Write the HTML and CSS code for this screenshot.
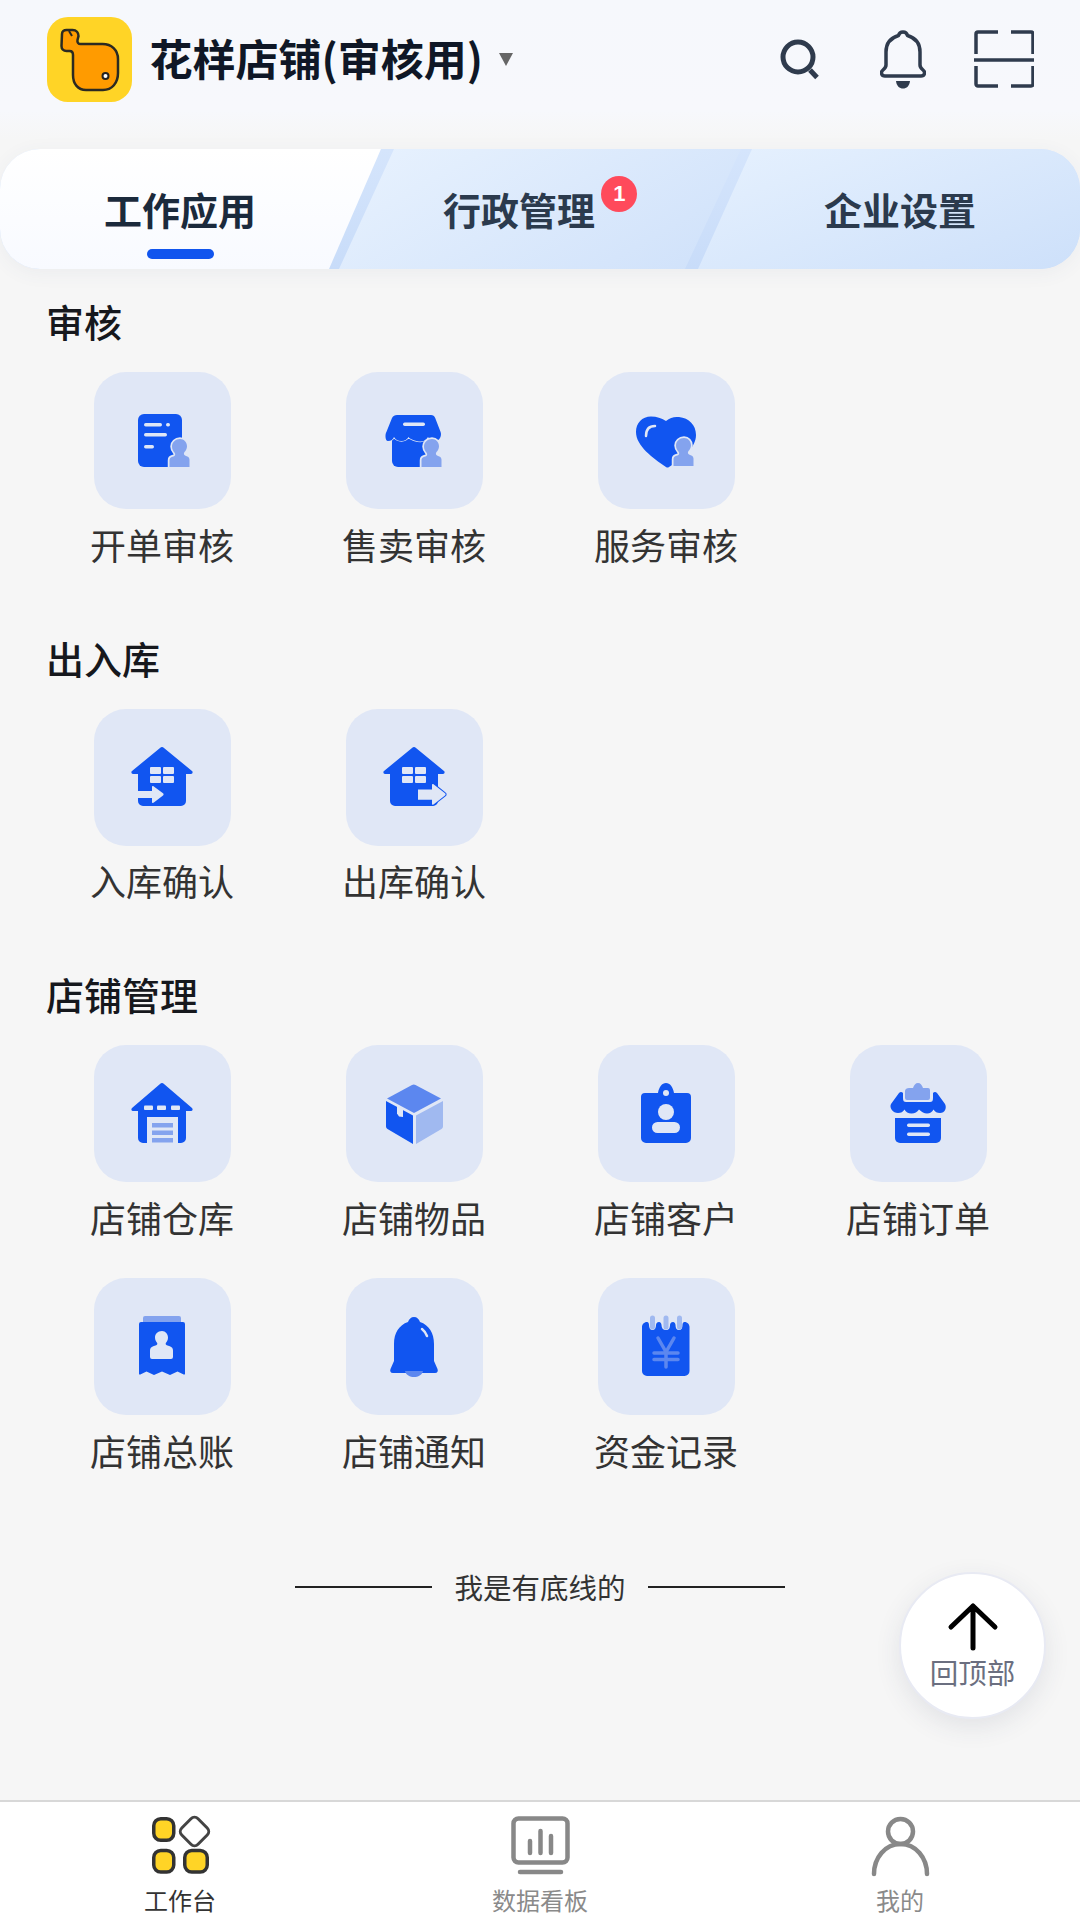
FILE: index.html
```html
<!DOCTYPE html>
<html lang="zh-CN">
<head>
<meta charset="utf-8">
<title>花样店铺</title>
<link rel="stylesheet" href="styles.css">
</head>
<body>
<svg class="defs" width="0" height="0" aria-hidden="true">
  <defs>
    <symbol id="stamp" viewBox="0 0 80 80">
      <path class="l stamp-cut" d="M58 38c4.200 0 7 3.300 7 7.200 0 2.600-1.200 4.300-2.500 5.900-.9 1.100-.8 2.900.5 3.500l2.300.8c1.500.5 2.200 1.900 2.200 3.300V66H47.500v-6.600c0-1.500.8-2.900 2.300-3.400l2.300-.8c1.300-.6 1.400-2.400.5-3.500-1.400-1.700-2.600-3.400-2.600-6.300 0-4 3.500-7.400 8-7.400z"/>
    </symbol>
    <symbol id="house" viewBox="0 0 80 80">
      <path class="b" d="M38 11a3 3 0 0 1 4 0l28 23c1.200 1 .6 3-1 3h-5v27a5 5 0 0 1-5 5H21a5 5 0 0 1-5-5V37h-5c-1.600 0-2.200-2-1-3z"/>
      <rect class="c" x="28" y="30" width="11" height="7" rx="1"/>
      <rect class="c" x="41" y="30" width="11" height="7" rx="1"/>
      <rect class="c" x="28" y="39" width="11" height="7" rx="1"/>
      <rect class="c" x="41" y="39" width="11" height="7" rx="1"/>
    </symbol>
  </defs>
</svg>
<div class="page">
  <header class="topbar">
    <div class="brand">
      <svg class="logo" viewBox="0 0 85 85">
        <rect class="logo-bg" width="85" height="85" rx="21"/>
        <path class="logo-fish" d="M15 17c0-2.500 2-4 4.500-4h6c4 0 6 3 6 6l-1 4c-.5 2.500 1 4 3 4h22c9 0 15.500 6 15.500 15v14c0 10-6 17-15 17H39c-8 0-13-6-13-15V38c0-2.500-1.500-4-3.500-4h-3c-3 0-5-2-5-5z"/>
        <path class="logo-line" d="M22 14l3 5"/>
        <circle class="logo-eye" cx="58.500" cy="59" r="3"/>
      </svg>
      <span class="shop">花样店铺(审核用)</span>
      <svg class="caret" viewBox="0 0 14 13"><path class="caret-fill" d="M0 0h14L7 13z"/></svg>
    </div>
    <div class="actions">
      <svg class="act act-search" viewBox="0 0 40 50">
        <circle class="ink" cx="18" cy="22" r="15"/>
        <path class="ink" d="M30 35l7 7.500"/>
      </svg>
      <svg class="act act-bell" viewBox="0 0 46 60">
        <path class="ink thin" d="M23 2c2.500 0 4 1.500 4.500 3.500C36 8 40 14 40 22v13c0 2 1 3.400 3 5 2.800 2.300 1.500 6-2 6H5c-3.500 0-4.800-3.700-2-6 2-1.600 3-3 3-5V22C6 14 10 8 18.500 5.500 19 3.500 20.500 2 23 2z"/>
        <path class="ink-fill" d="M16 51h14c-.5 5-3.500 7.500-7 7.500S16.500 56 16 51z"/>
      </svg>
      <svg class="act act-scan" viewBox="0 0 60 58">
        <path class="ink thin" d="M24 2H4A2 2 0 0 0 2 4v20M37 2h20a2 2 0 0 1 2 2v20M24 56H4a2 2 0 0 1-2-2V36M37 56h20a2 2 0 0 0 2-2V36M0 30h60"/>
      </svg>
    </div>
  </header>

  <nav class="tabs">
    <div class="tab tab-a"><span class="tab-text">工作应用</span><i class="tab-line"></i></div>
    <div class="tab tab-b"><span class="tab-text">行政管理<b class="badge">1</b></span></div>
    <div class="tab tab-c"><span class="tab-text">企业设置</span></div>
  </nav>

  <main class="content">
    <section class="group">
      <h2 class="group-title">审核</h2>
      <div class="grid">
        <div class="item">
          <div class="tile"><svg class="ico" viewBox="0 0 80 80">
            <rect class="b" x="16" y="13" width="44" height="53" rx="6"/>
            <rect class="c" x="22" y="22" width="18" height="3.500" rx="1.700"/>
            <rect class="c" x="44" y="22" width="4" height="3.500" rx="1.700"/>
            <rect class="c" x="22" y="32" width="23" height="3.500" rx="1.700"/>
            <rect class="c" x="22" y="44" width="10" height="3.500" rx="1.700"/>
            <use href="#stamp" width="80" height="80"/>
          </svg></div>
          <span class="label">开单审核</span>
        </div>
        <div class="item">
          <div class="tile"><svg class="ico" viewBox="0 0 80 80">
            <path class="b" d="M18 38h44v28H24a6 6 0 0 1-6-6z"/>
            <path class="b cut" d="M23 14h34c2 0 3.500 1 4.200 3l5.400 14c1.400 4-1 9-5.600 9-3.500 0-5.500-1.300-7-4-1.500 2.700-4 4.500-7.500 4.500S36 38.500 34.500 36c-1.500 2.700-3.700 4-7 4-3.800 0-6-1.300-7.500-4-1 2.500-3 4-6 4-3 0-3-7-1.600-9L18 17c.8-2 3-3 5-3z"/>
            <rect class="c" x="29" y="21.500" width="22" height="3.500" rx="1.700"/>
            <use href="#stamp" width="80" height="80"/>
          </svg></div>
          <span class="label">售卖审核</span>
        </div>
        <div class="item">
          <div class="tile"><svg class="ico" viewBox="0 0 80 80">
            <path class="b" d="M40 20c4-3.500 8-4.500 13-4 10 1 17 8 17 18 0 13-14 24-27 32-1 .8-2 .8-3 0C27 57 10 45 10 31c0-9 6-15.500 15-15.500 6 0 10 1.500 15 4.500z"/>
            <path class="hl" d="M20 35c0-7 3-10 9-10"/>
            <use href="#stamp" y="-1" width="80" height="80"/>
          </svg></div>
          <span class="label">服务审核</span>
        </div>
      </div>
    </section>

    <section class="group">
      <h2 class="group-title">出入库</h2>
      <div class="grid">
        <div class="item">
          <div class="tile"><svg class="ico" viewBox="0 0 80 80">
            <use href="#house" width="80" height="80"/>
            <path class="c" d="M16 54h14v-4c0-.8.800-1.200 1.500-.8L41 56.300c.8.600.8 1.600 0 2.200l-9.500 7.300c-.7.400-1.500 0-1.500-.8v-4H16z"/>
          </svg></div>
          <span class="label">入库确认</span>
        </div>
        <div class="item">
          <div class="tile"><svg class="ico" viewBox="0 0 80 80">
            <use href="#house" width="80" height="80"/>
            <path class="c blue-edge" d="M44 52.500h14v-4.500c0-.8.800-1.200 1.500-.8L71 56.300c.8.600.8 1.600 0 2.200L59.500 67.500c-.7.400-1.500 0-1.500-.8v-4H44z"/>
          </svg></div>
          <span class="label">出库确认</span>
        </div>
      </div>
    </section>

    <section class="group">
      <h2 class="group-title">店铺管理</h2>
      <div class="grid">
        <div class="item">
          <div class="tile"><svg class="ico" viewBox="0 0 80 80">
            <path class="b" d="M38 10a3 3 0 0 1 4 0l28 24c1.200 1 .6 3-1 3h-5v27a5 5 0 0 1-5 5h-3V43H25v26h-4a5 5 0 0 1-5-5V37h-5c-1.600 0-2.200-2-1-3z"/>
            <rect class="c" x="22" y="31.500" width="9" height="4.500" rx="1"/>
            <rect class="c" x="35" y="31.500" width="9" height="4.500" rx="1"/>
            <rect class="c" x="49" y="31.500" width="9" height="4.500" rx="1"/>
            <rect class="l" x="30" y="49" width="21" height="4.500"/>
            <rect class="l" x="30" y="56.500" width="21" height="4.500"/>
            <rect class="l" x="30" y="64" width="21" height="4.500"/>
          </svg></div>
          <span class="label">店铺仓库</span>
        </div>
        <div class="item">
          <div class="tile"><svg class="ico" viewBox="0 0 80 80">
            <path class="mid" d="M38 11a4 4 0 0 1 3.500 0L67 24.500 40 39 13 24.500z"/>
            <path class="b" d="M12 27l27 14.500V70L13.500 55A3 3 0 0 1 12 52.500z"/>
            <path class="pale" d="M69 27L42 41.500V70l25.500-15A3 3 0 0 0 69 52.500z"/>
            <path class="c" d="M23 31l6 3.500V43l-4-.5-2-3z"/>
          </svg></div>
          <span class="label">店铺物品</span>
        </div>
        <div class="item">
          <div class="tile"><svg class="ico" viewBox="0 0 80 80">
            <path class="b" d="M19 19h13c1-6 4-10 8-10s7 4 8 10h13a4 4 0 0 1 4 4v41a5 5 0 0 1-5 5H20a5 5 0 0 1-5-5V23a4 4 0 0 1 4-4z"/>
            <circle class="c" cx="40" cy="19" r="3"/>
            <circle class="c" cx="40" cy="38" r="8"/>
            <rect class="c" x="26" y="48" width="28" height="11" rx="5.500"/>
          </svg></div>
          <span class="label">店铺客户</span>
        </div>
        <div class="item">
          <div class="tile"><svg class="ico" viewBox="0 0 80 80">
            <path class="b" d="M17 44h46v20a5 5 0 0 1-5 5H22a5 5 0 0 1-5-5z"/>
            <path class="b cut" d="M21 19c1.500-1.500 3-1 4 0v5c0 3 1 4 3 4h24c2 0 3-1 3-4v-5c1-1 2.500-1.500 4 0l8 11c2 4 0 9-5 9-3 0-5-1-6.500-3.500C54 38 52 39.500 49 39.500S44 38 41 35.500c-2 2.500-4 4-7.500 4S28 38 26.500 35.500C25 38 23 39 20 39c-5 0-9-5-7-9z"/>
            <path class="l" d="M31 14h4c1-3 2.500-5 5-5s4 2 5 5h5a2 2 0 0 1 2 2v8a2 2 0 0 1-2 2H29a2 2 0 0 1-2-2v-7c0-2 2-3 4-3z"/>
            <rect class="c" x="29" y="49.500" width="23" height="3.500" rx="1.700"/>
            <rect class="c" x="29" y="58.500" width="23" height="3.500" rx="1.700"/>
          </svg></div>
          <span class="label">店铺订单</span>
        </div>
        <div class="item">
          <div class="tile"><svg class="ico" viewBox="0 0 80 80">
            <path class="l" d="M23 9h34a2 2 0 0 1 2 2v5H21v-5a2 2 0 0 1 2-2z"/>
            <path class="b" d="M19 15h42a2 2 0 0 1 2 2v50l-.8.700-6.700-3.200-7.500 3.500-8-3.500-8 3.500-7.500-3.500-6.700 3.200-.8-.7V17a2 2 0 0 1 2-2z"/>
            <path class="c" d="M40 24c3.500 0 6 3 6 6.500 0 2.500-1 4-2 5.200-.7 1-.3 2 .8 2.500l3 1c2 .6 3.200 2.200 3.200 4.300V50a2 2 0 0 1-2 2H30a2 2 0 0 1-2-2v-6.500c0-2.100 1.200-3.700 3.200-4.300l3-1c1.100-.5 1.500-1.500.8-2.500-1-1.200-2-2.700-2-5.200 0-3.500 2.500-6.500 7-6.500z"/>
          </svg></div>
          <span class="label">店铺总账</span>
        </div>
        <div class="item">
          <div class="tile"><svg class="ico" viewBox="0 0 80 80">
            <path class="b" d="M40 10c3 0 5 2 6 5 9 3 14 11 14 22v17l3.500 8c.8 2 0 4-2.500 4H19c-2.500 0-3.300-2-2.500-4l3.500-8V37c0-11 5-19 14-22 1-3 3-5 6-5z"/>
            <path class="mid" d="M31 64h18c-1 4-5 6-9 6s-8-2-9-6z"/>
            <path class="hl" d="M48 22c2 1.500 3.500 3.500 5 7"/>
          </svg></div>
          <span class="label">店铺通知</span>
        </div>
        <div class="item">
          <div class="tile"><svg class="ico" viewBox="0 0 80 80">
            <path class="b" d="M21 15c1.500 0 2 1.500 2 3 0 3 1.200 5 3.500 5s3.500-2 3.500-5c0-1.500 1-3 3-3 1.500 0 2.500 1.500 2.500 3 0 3 1.500 5 4.500 5s4-2 4-5c0-1.500 1-3 3-3 1.500 0 2.500 1.500 2.500 3 0 3 1 5 3.500 5s3.500-2 3.500-5c0-1.500.5-3 2-3 3 0 5 2.500 5 5v44a5 5 0 0 1-5 5H21a5 5 0 0 1-5-5V20c0-2.500 2-5 5-5z"/>
            <path class="pale-line" d="M26.500 11v9M40 11v9M53.500 11v9"/>
            <path class="yen" d="M32 31l8 14 8-14M28 46h24M28 52.500h24M40 45v15"/>
          </svg></div>
          <span class="label">资金记录</span>
        </div>
      </div>
    </section>

    <div class="divider"><i class="rule"></i><span class="divider-text">我是有底线的</span><i class="rule"></i></div>
  </main>

  <nav class="bottom">
    <div class="bottom-item is-on">
      <svg class="bottom-ico" viewBox="0 0 57 57">
        <rect class="ny" x="1.750" y="1.750" width="20" height="21.500" rx="7"/>
        <rect class="nw" x="31" y="3" width="23" height="23" rx="5" transform="rotate(45 42.500 14.500)"/>
        <rect class="ny" x="1.750" y="33.500" width="20" height="21.500" rx="7"/>
        <rect class="ny" x="32.750" y="33.500" width="22.500" height="21.500" rx="7"/>
      </svg>
      <span class="bottom-label">工作台</span>
    </div>
    <div class="bottom-item">
      <svg class="bottom-ico" viewBox="0 0 57 57">
        <rect class="ng" x="1.500" y="1.500" width="54" height="44" rx="5"/>
        <path class="ng" d="M18 36V24M28.500 36V14M39 36V19"/>
        <path class="ng" d="M8 55h41"/>
      </svg>
      <span class="bottom-label">数据看板</span>
    </div>
    <div class="bottom-item">
      <svg class="bottom-ico" viewBox="0 0 57 57">
        <circle class="ng" cx="28.500" cy="14.500" r="12.500"/>
        <path class="ng" d="M2 57c0-16 11-30 26.500-30S55 41 55 57"/>
      </svg>
      <span class="bottom-label">我的</span>
    </div>
  </nav>

  <aside class="backtop">
    <svg class="backtop-ico" viewBox="0 0 52 48">
      <path class="arrow" d="M4 24L26 3l22 21M26 3v42"/>
    </svg>
    <span class="backtop-label">回顶部</span>
  </aside>
</div>
</body>
</html>
```

FILE: styles.css
```css
* { box-sizing: border-box; }
html, body { margin: 0; padding: 0; }
body {
  font-family: "Noto Sans CJK SC", "Noto Sans", "Liberation Sans", sans-serif;
  background: #f6f6f6;
}
.defs { display: block; height: 0; }
.page {
  position: relative;
  width: 1080px;
  height: 1920px;
  overflow: hidden;
  display: flex;
  flex-direction: column;
  background: linear-gradient(#f6f8fc 0, #f7f8fc 110px, #f6f6f6 140px);
}

/* top bar */
.topbar {
  height: 149px;
  flex: none;
  display: flex;
  justify-content: space-between;
  padding: 17px 46px 0 46.500px;
}
.brand { display: flex; align-items: flex-start; }
.logo { width: 85px; height: 85px; flex: none; }
.logo-bg { fill: #ffd426; }
.logo-fish { fill: #ff9b00; stroke: #2b2a22; stroke-width: 2.500; }
.logo-line { fill: none; stroke: #2b2a22; stroke-width: 2; }
.logo-eye { fill: #fff; stroke: #222; stroke-width: 2; }
.shop {
  margin: 9.500px 0 0 18px;
  font-size: 43px;
  line-height: 60px;
  font-weight: 700;
  color: #0f1726;
  white-space: nowrap;
}
.caret { width: 14px; height: 13px; margin: 36px 0 0 16px; flex: none; }
.caret-fill { fill: #666; }
.actions { display: flex; align-items: flex-start; }
.act { display: block; flex: none; }
.act-search { width: 40px; height: 50px; margin-top: 18px; }
.act-bell { width: 46px; height: 60px; margin: 13px 0 0 60px; }
.act-scan { width: 60px; height: 58px; margin: 13px 0 0 48px; }
.ink { fill: none; stroke: #2f3b4d; stroke-width: 5; }
.ink.thin { stroke-width: 3.500; stroke-linejoin: round; }
.ink-fill { fill: #2f3b4d; }

/* tabs */
.tabs {
  flex: none;
  height: 120px;
  display: grid;
  grid-template-columns: 360px 318px 1fr;
  border-radius: 40px;
  overflow: hidden;
  background: linear-gradient(#d5e5fc, #c8dcf9);
  box-shadow: 0 4px 20px rgba(60, 80, 120, .06);
}
.tab {
  position: relative;
  display: flex;
  align-items: center;
  justify-content: center;
  font-size: 38px;
  line-height: 50px;
  font-weight: 700;
  color: #2b3a4d;
}
.tab::before { content: ""; position: absolute; top: 0; bottom: 0; }
.tab-a { color: #1b2a3c; }
.tab-a::before {
  left: 0; width: 381px;
  background: linear-gradient(#fff, #f8faff);
  clip-path: polygon(0 0, 381px 0, 329px 120px, 0 120px);
}
.tab-b::before {
  left: -21px; width: 402px;
  background: linear-gradient(150deg, #e8f2fe 0, #cfe1fa 100%);
  clip-path: polygon(55px 0, 402px 0, 346px 120px, 0 120px);
}
.tab-c { padding-left: 42px; }
.tab-c::before {
  left: 20px; right: 0;
  background: linear-gradient(160deg, #e6f1fe 0, #cde0fa 100%);
  clip-path: polygon(54px 0, 382px 0, 382px 120px, 0 120px);
}
.tab-text { position: relative; }
.tab-line {
  position: absolute;
  left: 146.500px;
  bottom: 10px;
  width: 67px;
  height: 10px;
  border-radius: 5px;
  background: #1155ee;
}
.badge {
  position: absolute;
  left: 158.500px;
  top: -8px;
  width: 36px;
  height: 36px;
  border-radius: 50%;
  background: #ff4a5b;
  color: #fff;
  font-family: "Liberation Sans", sans-serif;
  font-size: 22px;
  line-height: 36px;
  font-weight: 700;
  text-align: center;
}

/* content */
.content { flex: 1; min-height: 0; padding-top: 26px; }
.group + .group { margin-top: 62px; }
.group-title {
  margin: 0 0 25px 46px;
  font-size: 38px;
  line-height: 52px;
  font-weight: 500;
  color: #16181d;
}
.grid {
  display: grid;
  grid-template-columns: repeat(4, 252px);
  row-gap: 35.500px;
  padding-left: 36px;
}
.item { display: flex; flex-direction: column; align-items: center; }
.tile {
  width: 137px;
  height: 137px;
  border-radius: 32px;
  background: #e0e7f6;
  display: flex;
  align-items: center;
  justify-content: center;
}
.ico { width: 80px; height: 80px; display: block; overflow: visible; }
.label {
  margin-top: 8.500px;
  font-size: 36px;
  line-height: 52px;
  color: #333;
  white-space: nowrap;
}
.b { fill: #1155f0; }
.l { fill: #84a3ee; }
.c { fill: #e0e7f6; }
.mid { fill: #5c87ef; }
.pale { fill: #a0b9f0; }
.cut { stroke: #e0e7f6; stroke-width: 1.500; paint-order: stroke; }
.stamp-cut { stroke: #e0e7f6; stroke-width: 3.500; paint-order: stroke; }
.blue-edge { stroke: #1155f0; stroke-width: 2; paint-order: stroke; }
.hl { fill: none; stroke: #e0e7f6; stroke-width: 2.500; stroke-linecap: round; }
.pale-line { fill: none; stroke: #a0b9f0; stroke-width: 5; stroke-linecap: round; }
.yen { fill: none; stroke: #5c87ef; stroke-width: 3.500; stroke-linecap: round; stroke-linejoin: round; }

/* divider */
.divider {
  margin-top: 91.500px;
  display: flex;
  align-items: center;
  justify-content: center;
  gap: 22px;
}
.rule { width: 137px; height: 2px; background: #222; }
.divider-text { font-size: 28.500px; line-height: 40px; color: #333; }

/* bottom nav */
.bottom {
  flex: none;
  height: 120px;
  display: grid;
  grid-template-columns: repeat(3, 360px);
  background: #fff;
  border-top: 2px solid #d8d8d8;
}
.bottom-item { display: flex; flex-direction: column; align-items: center; padding-top: 15px; }
.bottom-ico { width: 57px; height: 57px; display: block; overflow: visible; }
.bottom-label { margin-top: 9px; font-size: 24px; line-height: 34px; color: #8a8a8a; }
.is-on .bottom-label { color: #333; }
.ny { fill: #ffd426; stroke: #333; stroke-width: 3.500; }
.nw { fill: #fff; stroke: #444; stroke-width: 3; }
.ng { fill: none; stroke: #888; stroke-width: 4.500; stroke-linecap: round; }

/* back to top */
.backtop {
  position: absolute;
  left: 899px;
  top: 1572px;
  width: 147px;
  height: 147px;
  border-radius: 50%;
  background: #fff;
  border: 2px solid #e8eaf3;
  box-shadow: 0 8px 26px rgba(50, 60, 90, .1);
  display: flex;
  flex-direction: column;
  align-items: center;
  padding-top: 29px;
}
.backtop-ico { width: 52px; height: 48px; display: block; overflow: visible; }
.arrow { fill: none; stroke: #000; stroke-width: 5; stroke-linecap: round; stroke-linejoin: round; }
.backtop-label { margin-top: 1px; font-size: 28.500px; line-height: 40px; color: #6b6f80; }
```
